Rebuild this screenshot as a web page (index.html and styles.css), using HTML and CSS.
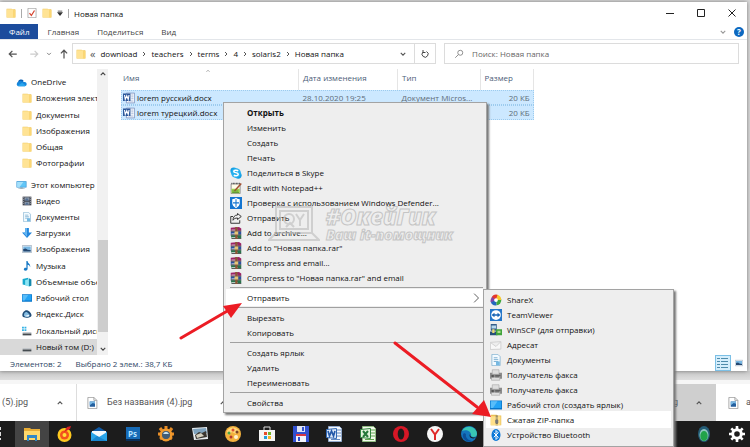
FILE: index.html
```html
<!DOCTYPE html>
<html lang="ru">
<head>
<meta charset="utf-8">
<meta name="viewport" content="width=device-width, initial-scale=1">
<title>Новая папка</title>
<link rel="stylesheet" href="styles.css">
</head>
<body>
<svg class="sprites" aria-hidden="true">
  <symbol id="folder" viewBox="0 0 16 16"><path fill="#efc55c" d="M1 1h8l1 1h5v13H1z"/><path fill="#ffe394" d="M1 2h11v13H1z"/><path fill="#fbd775" d="M12 3h3v12h-4z"/></symbol>
  <symbol id="chev-r" viewBox="0 0 16 16"><path fill="none" stroke="currentColor" stroke-width="2" d="M6 4l4 4-4 4"/></symbol>
  <symbol id="chev-sub" viewBox="0 0 16 16"><path fill="none" stroke="currentColor" stroke-width="1.500" d="M5 1l7 7-7 7"/></symbol>
  <symbol id="chev-u" viewBox="0 0 16 16"><path fill="none" stroke="currentColor" stroke-width="3" d="M2 11l6-6 6 6"/></symbol>
  <symbol id="chev-d" viewBox="0 0 16 16"><path fill="none" stroke="currentColor" stroke-width="3" d="M2 5l6 6 6-6"/></symbol>
  <symbol id="cloud" viewBox="0 0 16 12"><path fill="#0a5fb4" d="M3 6a4.500 4.500 0 0 1 8-2l-4 7H3a3 3 0 0 1 0-5z"/><path fill="#1687dc" d="M5 5c3-1 5 1 7 1a3 3 0 0 1 1 6H3a3 3 0 0 1-1-5z"/><path fill="#29a5ee" d="M3 11l6-4 5 4-1 1H4z"/></symbol>
  <symbol id="pc" viewBox="0 0 16 16"><path fill="#2b8fd2" d="M0 2h16v10H0z"/><path fill="#62c6f7" d="M1 3h14v8H1z"/><path fill="#a4e0fb" d="M1 3h10l-6 8H1z"/><path fill="#7e98a8" d="M6 12h4v1h3v1H3v-1h3z"/></symbol>
  <symbol id="video" viewBox="0 0 16 16"><path fill="#40444e" d="M1 1h14v14H1z"/><path fill="#8896a8" d="M4 2h8v5H4zM4 9h8v5H4z"/><path stroke="#cfd5dd" stroke-dasharray="1.500 1.500" d="M2.500 2v12M13.500 2v12"/><path fill="#536e93" d="M5 6l3-3 3 4H5zM5 13l3-3 3 4H5z"/></symbol>
  <symbol id="doc" viewBox="0 0 16 16"><path fill="#f4fbff" stroke="#7baecf" d="M2.500.5h8l3 3v12h-11z"/><path stroke="#5f9cc4" d="M5 5h5M5 7.500h6M5 10h6"/><path fill="#76b9e2" d="M8 10h5v5H8z"/></symbol>
  <symbol id="down" viewBox="0 0 16 16"><path fill="#2386db" d="M5 0h6v7h5l-8 9-8-9h5z"/><path fill="#62b4f2" d="M5 0h3v14L2 7h3z"/></symbol>
  <symbol id="image" viewBox="0 0 16 16"><path fill="#f5f9fc" stroke="#8a9caf" d="M.5 2.500h15v11H.5z"/><path fill="#78b7e3" d="M2 4h12v8H2z"/><path fill="#24466f" d="M2 8l4-1 3 2 5 1v2H2z"/></symbol>
  <symbol id="music" viewBox="0 0 16 16"><path fill="#1879c5" d="M7 0h2c0 4 5 4 4 10-1-3-2-4-4-4v6c0 5-7 4-6 1 0-2 2-3 4-2z"/></symbol>
  <symbol id="cube" viewBox="0 0 16 16"><path fill="#18a9cd" d="M1 3l9-2v13l-9-2z"/><path fill="#8ce6f5" d="M5 5l6-2v12l-6-2z"/><path fill="#1589ac" d="M11 2l4 2v10l-4 1z"/></symbol>
  <symbol id="desk" viewBox="0 0 16 16"><path fill="#0875c9" d="M0 2h16v12H0z"/><path fill="#23a3f5" d="M1 3h14v9H1z"/><path fill="#58bdf9" d="M1 3h9l-6 9H1z"/></symbol>
  <symbol id="yadisk" viewBox="0 0 16 16"><path fill="#204d78" d="M1 12C-1 7 4 1 8 2s8 6 7 9-12 4-14 1z"/><path fill="#84bce1" d="M3 10c0-4 3-6 5-5s5 4 4 6-8 3-9-1z"/><path fill="#fff" d="M4 11l8-2-2 3z"/></symbol>
  <symbol id="windisk" viewBox="0 0 16 16"><path fill="#35b3e6" d="M0 1h3v3H0zM4 1h3v3H4zM0 5h3v3H0zM4 5h3v3H4z"/><path fill="#b8bec3" d="M1 10h14v2H1z"/><path fill="#454b50" d="M1 12h14v3H1z"/></symbol>
  <symbol id="disk" viewBox="0 0 16 16"><path fill="#b8bec3" d="M1 10h14v2H1z"/><path fill="#454b50" d="M1 12h14v3H1z"/></symbol>
  <symbol id="word" viewBox="0 0 16 16"><path fill="#fff" stroke="#6d87b8" d="M4.500 1.500h11v13h-11z"/><path stroke="#88a1cc" d="M11 4h3M11 6.500h3M11 9h3M7 12h7"/><path fill="#2b579a" d="M0 2h10v10H0z"/><path fill="none" stroke="#fff" stroke-width="1.500" d="M2 4l1 6 2-5 2 5 1-6"/></symbol>
  <symbol id="skype" viewBox="0 0 16 16"><circle cx="5" cy="5" r="4.500" fill="#169ee3"/><circle cx="11" cy="11" r="4.500" fill="#169ee3"/><circle cx="8" cy="8" r="6.500" fill="#25b1ef"/><path fill="none" stroke="#fff" stroke-width="2" d="M11 5c-2-1-6-1-6 1s6 1 6 3.500S7 12 5 11"/></symbol>
  <symbol id="npp" viewBox="0 0 16 16"><path fill="#fffde9" stroke="#777" d="M1.500 2.500h12v13h-12z"/><path stroke="#444" stroke-dasharray="1 1" stroke-width="2" d="M2 2h11"/><path fill="#9bd34b" d="M2 9h11v6H2z"/><path stroke="#a24f32" stroke-width="2" d="M15 2L6 12"/><path stroke="#54882f" d="M3 12h8M3 14h9"/></symbol>
  <symbol id="defender" viewBox="0 0 16 16"><path fill="#1475d1" d="M0 0h16v16H0z"/><path fill="#fff" d="M3 3c2 0 4-1 5-2 1 1 3 2 5 2v5c0 3-2 5-5 7-3-2-5-4-5-7z"/><path fill="#1475d1" d="M7.300 3h1.400v4H12v1.500H8.700V13H7.300V8.500H4V7h3.300z"/></symbol>
  <symbol id="share" viewBox="0 0 16 16"><path fill="none" stroke="#333" stroke-width="1.300" d="M4 6H1v9h12v-4M10 2l5 4-5 4V8c-3 0-5 1-6 3 0-4 2-7 6-7z"/></symbol>
  <symbol id="rar" viewBox="0 0 16 16"><path fill="#9c2366" d="M1 1l11-1 3 2v3H1z"/><path fill="#2c4e9e" d="M1 6h14v4H1z"/><path fill="#27744b" d="M1 11h14v4H2z"/><path stroke="#222" d="M1 5.500h14M1 10.500h14M2 15.500h13"/><path stroke="#e5e5e5" d="M2 4h8M2 9h8M2 14h8"/><path fill="#8d5635" d="M7 0h3v16H7z"/><path fill="#e3c577" d="M6 6h5v4H6z"/></symbol>
  <symbol id="sharex" viewBox="0 0 16 16"><path fill="#2367bd" d="M8 8L1 10a7 7 0 0 0 8 5z"/><path fill="#41a83d" d="M8 8l1 7a7 7 0 0 0 6-8z"/><path fill="#f6c82c" d="M8 8h7a7 7 0 0 0-6-7z"/><path fill="#e5362c" d="M8 8l2-7a7 7 0 0 0-8 4z"/><path fill="#8344a5" d="M8 8L3 4a7 7 0 0 0-2 7z"/><circle cx="8" cy="8" r="2.500" fill="#fff"/></symbol>
  <symbol id="tv" viewBox="0 0 16 16"><path fill="#2476c9" d="M0 0h16v16H0z"/><circle cx="8" cy="8" r="6.500" fill="#fff"/><path fill="#1764b5" d="M2 8l4-3v2h4V5l4 3-4 3V9H6v2z"/></symbol>
  <symbol id="scp" viewBox="0 0 16 16"><path fill="#345d8a" d="M1 0h8v9H1z"/><path fill="#b7d9ed" d="M2 2h6v4H2z"/><path fill="#265078" d="M0 10h10v5H0z"/><path fill="#41a43c" d="M8 7h8v8H8z"/><path fill="#b0df8d" d="M10 9h4v3h-4z"/><path fill="#eddb70" d="M3 7h3v5H3z"/></symbol>
  <symbol id="mail" viewBox="0 0 16 16"><path fill="#f8f8f8" stroke="#c7c7c7" d="M.5 4.500l14-1v10l-14 .5zM1 5l7 5 6-6"/></symbol>
  <symbol id="fax" viewBox="0 0 16 16"><path fill="#8b8b8b" d="M0 5h16v8H0z"/><path fill="#dedede" stroke="#999" stroke-width=".7" d="M3 1h9v6H3zM2 11h11v4H2z"/><path fill="#555" d="M2 8h3v3H2zM7 8h7v1H7zM7 10h5v1H7z"/></symbol>
  <symbol id="zip" viewBox="0 0 16 16"><path fill="#e9bf56" d="M1 1h8l1 1h5v13H1z"/><path fill="#ffe08a" d="M1 3h13v12H1z"/><path stroke="#7d755f" stroke-width="3" stroke-dasharray="1.500 1" d="M9 2v13"/><path fill="#777" d="M7 8h4v4H7z"/></symbol>
  <symbol id="bt" viewBox="0 0 16 16"><ellipse cx="8" cy="8" rx="6" ry="8" fill="#0b78d8"/><path fill="none" stroke="#fff" stroke-width="1.300" d="M5 5l6 6-3 3V2l3 3-6 6"/></symbol>
  <symbol id="jpg" viewBox="0 0 16 16"><path fill="#fff" stroke="#909090" d="M2.500.5h8l4 4v11h-12z"/><path fill="none" stroke="#909090" d="M10.500.5v4h4"/><path fill="#245f9e" d="M5 6h7v7H5z"/><path fill="#78b8e4" d="M5 6h7v3L9 8l-4 3z"/></symbol>
</svg>

<div class="desktop">
  <main class="window">
    <header class="titlebar">
      <svg class="ic10"><use href="#folder"/></svg><i class="bar"></i>
      <svg class="ic10" viewBox="0 0 16 16"><path fill="#fff" stroke="#8a8a8a" d="M1.500.5h13v15h-13z"/><path fill="none" stroke="#d6432f" stroke-width="2" d="M4 8l3 4 5-8"/></svg>
      <svg class="ic10"><use href="#folder"/></svg>
      <svg class="ic6" viewBox="0 0 8 8"><path stroke="#333" d="M1 1.500h6"/><path fill="#333" d="M0 3h8L4 8z"/></svg><i class="bar"></i>
      <h1>Новая папка</h1>
      <div class="controls">
        <button aria-label="Свернуть"><svg viewBox="0 0 10 10"><path d="M1 5.500h8"/></svg></button>
        <button aria-label="Развернуть"><svg viewBox="0 0 10 10"><path d="M1.500 1.500h7v7h-7z"/></svg></button>
        <button aria-label="Закрыть"><svg viewBox="0 0 10 10"><path d="M1.500 1.500l7 7M8.500 1.500l-7 7"/></svg></button>
      </div>
    </header>
    <nav class="tabs">
      <button class="file">Файл</button><button>Главная</button><button>Поделиться</button><button>Вид</button>
      <div class="help">
        <svg class="ic6"><use href="#chev-d"/></svg>
        <button aria-label="Справка">?</button>
      </div>
    </nav>
    <div class="navrow">
      <div class="arrows">
        <svg class="ic10" viewBox="0 0 16 16"><path d="M14 8H2M7 3L2 8l5 5"/></svg>
        <svg class="ic10 off" viewBox="0 0 16 16"><path d="M2 8h12M9 3l5 5-5 5"/></svg>
        <svg class="ic6 mid" viewBox="0 0 16 16"><path d="M3 5l5 5 5-5"/></svg>
        <svg class="ic10" viewBox="0 0 16 16"><path d="M8 15V2M3 7l5-5 5 5"/></svg>
      </div>
      <div class="address">
        <svg class="ic10"><use href="#folder"/></svg>
        <span class="more">«</span>
        <a href="#">download</a><svg class="ic8"><use href="#chev-r"/></svg>
        <a href="#">teachers</a><svg class="ic8"><use href="#chev-r"/></svg>
        <a href="#">terms</a><svg class="ic8"><use href="#chev-r"/></svg>
        <a href="#">4</a><svg class="ic8"><use href="#chev-r"/></svg>
        <a href="#">solaris2</a><svg class="ic8"><use href="#chev-r"/></svg>
        <a href="#">Новая папка</a>
        <svg class="ic6 drop"><use href="#chev-d"/></svg>
        <button class="refresh" aria-label="Обновить"><svg class="ic8" viewBox="0 0 16 16"><path fill="none" stroke="#444" stroke-width="2" d="M11 3a6 6 0 1 1-7 1M4 0v5h5"/></svg></button>
      </div>
      <label class="search">
        <svg class="ic10" viewBox="0 0 16 16"><path fill="none" stroke="#777" stroke-width="1.300" d="M14 6a4 4 0 1 1-8 0 4 4 0 0 1 8 0zM7 9l-5 5"/></svg>
        <input type="search" aria-label="Поиск" placeholder="Поиск: Новая папка">
      </label>
    </div>
    <div class="body">
      <aside class="tree">
        <ul class="group six">
          <li class="root"><svg><use href="#cloud"/></svg>OneDrive</li>
          <li><svg><use href="#folder"/></svg>Вложения элект</li>
          <li><svg><use href="#folder"/></svg>Документы</li>
          <li><svg><use href="#folder"/></svg>Изображения</li>
          <li><svg><use href="#folder"/></svg>Общая</li>
          <li><svg><use href="#folder"/></svg>Фотографии</li>
        </ul>
        <ul class="group eleven">
          <li class="root"><svg><use href="#pc"/></svg>Этот компьютер</li>
          <li><svg><use href="#video"/></svg>Видео</li>
          <li><svg><use href="#doc"/></svg>Документы</li>
          <li><svg><use href="#down"/></svg>Загрузки</li>
          <li><svg><use href="#image"/></svg>Изображения</li>
          <li><svg><use href="#music"/></svg>Музыка</li>
          <li><svg><use href="#cube"/></svg>Объемные объе</li>
          <li><svg><use href="#desk"/></svg>Рабочий стол</li>
          <li><svg><use href="#yadisk"/></svg>Яндекс.Диск</li>
          <li><svg><use href="#windisk"/></svg>Локальный диск</li>
          <li class="current"><svg><use href="#disk"/></svg>Новый том (D:)</li>
        </ul>
      </aside>
      <div class="scroll">
        <svg class="ic6"><use href="#chev-u"/></svg>
        <i class="track"></i><i class="thumb"></i>
        <svg class="ic6"><use href="#chev-d"/></svg>
      </div>
      <section class="files">
        <svg class="sort"><use href="#chev-u"/></svg>
        <table>
          <thead><tr><th class="c-name">Имя</th><th class="c-date">Дата изменения</th><th class="c-type">Тип</th><th class="c-size">Размер</th></tr></thead>
          <tbody>
            <tr><td><span><svg class="ic12"><use href="#word"/></svg>lorem русский.docx</span></td><td>28.10.2020 19:25</td><td>Документ Micros...</td><td>20 КБ</td></tr>
            <tr><td><span><svg class="ic12"><use href="#word"/></svg>lorem турецкий.docx</span></td><td></td><td></td><td>20 КБ</td></tr>
          </tbody>
        </table>
      </section>
    </div>
    <footer class="status">
      <span>Элементов: 2</span><span>Выбрано 2 элем.: 38,7 КБ</span>
      <div class="views">
        <button class="on" aria-label="Таблица"><svg viewBox="0 0 14 14"><path stroke="#4f8cab" stroke-dasharray="3 1 7 1" d="M1 2.500h12M1 5.500h12M1 8.500h12M1 11.500h12"/></svg></button>
        <button aria-label="Эскизы"><svg class="ic8"><use href="#image"/></svg></button>
      </div>
    </footer>
  </main>

  <div class="backdrop"></div>

  <div class="downloads">
    <div class="dl first"><span>ю (5).jpg</span><svg class="ic6"><use href="#chev-u"/></svg></div>
    <div class="dl second"><svg class="ic12"><use href="#jpg"/></svg><span>Без названия (4).jpg</span><svg class="ic6"><use href="#chev-u"/></svg></div>
    <div class="dl hot"><span>.jpg</span><svg class="ic6"><use href="#chev-u"/></svg></div>
    <div class="dl last"><svg class="ic12"><use href="#jpg"/></svg><span>a</span></div>
  </div>

  <nav class="taskbar">
    <span class="edge"><svg viewBox="0 0 16 16"><path fill="#ddd" d="M0 1h1v3H0zM0 6h1v4H0zM0 12h1v2H0z"/></svg></span>
    <span class="app active"><svg viewBox="0 0 16 16"><path fill="#e9ad35" d="M0 2h6l1 1h9v11H0z"/><path fill="#ffd96b" d="M0 5h16v9H0z"/><path fill="#3289c7" d="M3 9h10v6h-2v-3H5v3H3z"/></svg></span>
    <span class="app"><svg viewBox="0 0 16 16"><circle cx="7.500" cy="9" r="7" fill="#ffc91f"/><circle cx="7.500" cy="9" r="4.500" fill="#f4511e"/><circle cx="7.500" cy="9" r="2" fill="#ffdf37"/><path fill="#d82222" d="M7 6l3-5 4-1-1 3z"/></svg></span>
    <span class="app"><svg viewBox="0 0 16 16"><path fill="#0f5aa6" d="M0 6l8-5 8 5v9H0z"/><path fill="#f4f8fb" d="M1 5h14v6H1z"/><path fill="#2aa4e8" d="M0 6l8 5 8-5v9H0z"/><path fill="#1986cf" d="M0 15l6-5 2 1 8 4z"/></svg></span>
    <span class="app"><svg viewBox="0 0 16 16"><path fill="#092e57" d="M1 1h14v14H1z"/><path fill="#176bb6" d="M1 1h14v12H1z"/><text x="3" y="11" class="ps">Ps</text></svg></span>
    <span class="app"><svg viewBox="0 0 16 16"><path stroke="#e78c26" stroke-width="3" d="M8 0v4M2 2l3 4M14 2l-3 4M0 8h4M12 8h4M2 13l3-2M14 13l-3-2"/><circle cx="8" cy="9" r="5" fill="none" stroke="#f09a2e" stroke-width="3"/><circle cx="8" cy="9" r="4" fill="#415c77"/><path fill="#c8e1ef" d="M5 8c2-3 4-3 6 0z"/></svg></span>
    <span class="app"><svg viewBox="0 0 16 16"><path fill="#e9edf0" d="M0 2l15-1 1 12-14 1z"/><path fill="#7fa3be" d="M1 3l13-1 1 5-13 1z"/><path fill="#3a3630" d="M3 9l4-3 3 1 4-2 1 6-11 2z"/><path fill="#d5d0bf" d="M4 9l5-2 3 3-7 2z"/></svg></span>
    <span class="app"><svg viewBox="0 0 16 16"><circle cx="8" cy="8" r="8" fill="#f3b13d"/><path fill="#ffd979" d="M2 5a7 7 0 0 1 12 0l-3 3-4-2-4 3z"/><circle cx="4" cy="7" r="1.500" fill="#48a447"/><circle cx="8" cy="4" r="1.500" fill="#d94e33"/><circle cx="12" cy="6" r="1.500" fill="#7a4226"/><circle cx="6" cy="11" r="1.500" fill="#b63830"/><circle cx="11" cy="11" r="2" fill="#fff3d1"/></svg></span>
    <span class="app"><svg viewBox="0 0 16 16"><path fill="none" stroke="#ddd" d="M5 5V1h6v4"/><path fill="#f5f5f5" d="M0 4h16v11H0z"/><path fill="#e84c2a" d="M5 6h3v3H5z"/><path fill="#71b42c" d="M9 6h3v3H9z"/><path fill="#229dd8" d="M5 10h3v3H5z"/><path fill="#f3b624" d="M9 10h3v3H9z"/></svg></span>
    <span class="app"><svg viewBox="0 0 16 16"><path fill="#3150d0" d="M0 0h16v16H0z"/><path fill="#dee4f5" d="M4 0h8v6H4z"/><path fill="#d53645" d="M3 8h10v2H3z"/><path fill="#f2f4fb" d="M3 10h10v6H3z"/><path fill="#3150d0" d="M5 11h2v4H5zM9 1h2v4H9z"/></svg></span>
    <span class="app"><svg viewBox="0 0 16 16"><path fill="#f7f9fc" stroke="#92a9cb" d="M2.500.5h11l2 2v13h-13z"/><path stroke="#638ac3" d="M11 4h4M11 7h4M11 10h4M5 13.500h9"/><path fill="#dce8f8" stroke="#3169b5" d="M.5 3.500l10-1v10l-10-1z"/><path fill="none" stroke="#2459a8" stroke-width="1.700" d="M2 5l1.500 5L5.500 5l2 5L9 5"/></svg></span>
    <span class="app"><svg viewBox="0 0 16 16"><path fill="#f2faec" stroke="#92bd84" d="M2.500.5h11l2 2v13h-13z"/><path stroke="#5ea54c" d="M11 4h4M11 7h4M11 10h4M5 13.500h9"/><path fill="#e2f3dc" stroke="#338541" d="M.5 3.500l10-1v10l-10-1z"/><path stroke="#26783a" stroke-width="2" d="M3 5l5 6M8 5l-5 6"/></svg></span>
    <span class="app"><svg viewBox="0 0 16 16"><circle cx="8" cy="8" r="8" fill="#d61726"/><ellipse cx="8" cy="8" rx="3.300" ry="5.500" fill="#1c1c1c"/></svg></span>
    <span class="app"><svg viewBox="0 0 16 16"><circle cx="8" cy="8" r="8" fill="#f7f7f7"/><path fill="none" stroke="#df2a2a" stroke-width="2" d="M4 3l4 5.500L12 3M8 8v6"/></svg></span>
    <span class="app"><svg viewBox="0 0 16 16"><circle cx="8" cy="8" r="8" fill="#1474bd"/><path fill="#39c6b4" d="M1 5C4-2 16 0 16 8c0 3-4 4-6 2 1-5-5-7-9-5z"/><path fill="#0d4e98" d="M5 8c-1 4 3 7 7 7-6 3-13-4-9-8z"/><path fill="#1c1c1c" d="M9 8c0 4 4 4 6 3-2 3-8 1-6-3z"/></svg></span>
    <span class="skip"></span>
    <span class="app"><svg viewBox="0 0 16 16"><ellipse cx="8" cy="8" rx="6" ry="8" fill="#245c76"/><ellipse cx="8" cy="9" rx="4.500" ry="6" fill="#8fc9c0"/><ellipse cx="8" cy="10" rx="3.700" ry="5" fill="#21a34a"/></svg></span>
    <span class="app"><svg viewBox="0 0 16 16"><circle cx="8" cy="8" r="4.300" fill="none" stroke="#fff" stroke-width="3"/><path stroke="#fff" stroke-width="2.600" d="M8 0v3M8 13v3M0 8h3M13 8h3M2.300 2.300l2 2M11.700 11.700l2 2M13.700 2.300l-2 2M4.300 11.700l-2 2"/></svg></span>
  </nav>

  <menu class="menu context">
    <li><button class="strong">Открыть</button></li>
    <li><button>Изменить</button></li>
    <li><button>Создать</button></li>
    <li><button>Печать</button></li>
    <li><button><svg><use href="#skype"/></svg>Поделиться в Skype</button></li>
    <li><button><svg><use href="#npp"/></svg>Edit with Notepad++</button></li>
    <li><button><svg><use href="#defender"/></svg>Проверка с использованием Windows Defender...</button></li>
    <li><button><svg><use href="#share"/></svg>Отправить</button></li>
    <li><button><svg><use href="#rar"/></svg>Add to archive...</button></li>
    <li><button><svg><use href="#rar"/></svg>Add to "Новая папка.rar"</button></li>
    <li><button><svg><use href="#rar"/></svg>Compress and email...</button></li>
    <li><button><svg><use href="#rar"/></svg>Compress to "Новая папка.rar" and email</button></li>
    <li class="sep"></li>
    <li><button class="hover">Отправить<svg class="sub"><use href="#chev-sub"/></svg></button></li>
    <li class="sep"></li>
    <li><button>Вырезать</button></li>
    <li><button>Копировать</button></li>
    <li class="sep"></li>
    <li><button>Создать ярлык</button></li>
    <li><button>Удалить</button></li>
    <li><button>Переименовать</button></li>
    <li class="sep"></li>
    <li><button>Свойства</button></li>
  </menu>

  <div class="watermark">
    <svg viewBox="0 0 52 36"><path d="M8 1h36v26H8zM12 5h28v18H12zM8 27l-7 7h50l-7-7z"/><circle cx="21" cy="13" r="5"/><path d="M28 8l4 6 4-6M32 14v6M18 21l4-4 4 4"/></svg>
    <div><b>#ОкейГик</b><em>Ваш it-помощник</em></div>
  </div>

  <menu class="menu sendto">
    <li><button><svg><use href="#sharex"/></svg>ShareX</button></li>
    <li><button><svg><use href="#tv"/></svg>TeamViewer</button></li>
    <li><button><svg><use href="#scp"/></svg>WinSCP (для отправки)</button></li>
    <li><button><svg><use href="#mail"/></svg>Адресат</button></li>
    <li><button><svg><use href="#doc"/></svg>Документы</button></li>
    <li><button><svg><use href="#fax"/></svg>Получатель факса</button></li>
    <li><button><svg><use href="#fax"/></svg>Получатель факса</button></li>
    <li><button><svg><use href="#desk"/></svg>Рабочий стол (создать ярлык)</button></li>
    <li><button class="hover"><svg><use href="#zip"/></svg>Сжатая ZIP-папка</button></li>
    <li><button><svg><use href="#bt"/></svg>Устройство Bluetooth</button></li>
  </menu>

  <svg class="pointer one" viewBox="0 0 64 40"><path stroke="#ec1c24" stroke-width="3" stroke-linecap="round" d="M2 37L50 9"/><path fill="#ec1c24" d="M63 2L44 5l8 12z"/></svg>
  <svg class="pointer two" viewBox="0 0 100 78"><path stroke="#ec1c24" stroke-width="3" stroke-linecap="round" d="M2 2l82 64"/><path fill="#ec1c24" d="M98 76l-7-17-12 14z"/></svg>
</div>
</body>
</html>
```
FILE: styles.css
```css
* { box-sizing: border-box; }

body {
  margin: 0;
  font: 8px/15px "Open Sans", "Noto Sans", sans-serif;
  color: #111;
}

button, input {
  font: inherit;
  color: inherit;
  border: 0;
  padding: 0;
  margin: 0;
  background: none;
}

ul, menu { list-style: none; margin: 0; padding: 0; }
a { color: inherit; text-decoration: none; }
svg { flex: none; display: block; }

.sprites { position: absolute; width: 0; height: 0; }
.ic6 { width: 6px; height: 6px; }
.ic8 { width: 8px; height: 8px; }
.ic10 { width: 10px; height: 10px; }
.ic12 { width: 12px; height: 12px; }

.desktop {
  position: relative;
  display: flex;
  flex-direction: column;
  min-height: 100vh;
  padding-top: 2px;
  overflow: hidden;
  background: #d9d9d9;
}

/* Explorer window */
.window {
  flex: 1;
  display: flex;
  flex-direction: column;
  margin-right: 3px;
  background: #fff;
  box-shadow: 0 0 4px #777;
  z-index: 1;
}

.titlebar {
  display: flex;
  align-items: center;
  height: 22px;
  padding-left: 6px;
  gap: 5px;
}
.titlebar h1 { margin: 0; font-size: 8px; font-weight: 400; }
.bar { width: 1px; height: 9px; background: #aaa; }
.controls { display: flex; margin-left: auto; }
.controls button { width: 31px; height: 22px; display: grid; place-items: center; }
.controls svg { width: 10px; height: 10px; fill: none; stroke: #222; }

.tabs {
  display: flex;
  height: 16px;
  border-bottom: 1px solid #e3e6ea;
  color: #444;
}
.tabs > button { padding: 0 9px; }
.tabs .file { background: #1c4c9c; color: #fff; }
.help { display: flex; align-items: center; gap: 8px; margin-left: auto; padding-right: 3px; color: #999; }
.help button {
  width: 10px; height: 10px;
  border-radius: 50%;
  background: #0c68c0;
  color: #fff;
  font-size: 8px;
  font-weight: 700;
  line-height: 10px;
}

.navrow { display: flex; height: 21px; margin: 3px 8px 0 0; }
.arrows { display: flex; align-items: center; justify-content: space-between; width: 72px; padding: 0 3px 0 8px; }
.arrows svg { fill: none; stroke: #555; stroke-width: 2; }
.arrows .off { stroke: #ccc; margin-left: 4px; }
.address, .search { display: flex; align-items: center; border: 1px solid #dcdcdc; min-width: 0; }
.address { flex: 368; padding-left: 3px; white-space: nowrap; margin-right: 8px; }
.address a { padding: 0 3px; }
.address .ic8 { color: #555; }
.address .more { margin: 0 2px 0 4px; color: #555; font-size: 11px; }
.address .drop { margin: 0 8px 0 auto; color: #555; }
.refresh { align-self: stretch; width: 21px; border-left: 1px solid #dcdcdc; display: grid; place-items: center; }
.search { flex: 291; padding-left: 9px; gap: 8px; }
.search input { flex: 1; min-width: 0; outline: 0; }
.search input::placeholder { color: #666; opacity: 1; }

.body { flex: 1; display: flex; min-height: 0; padding-top: 5px; }

.tree { display: flex; flex-direction: column; width: 97px; padding-top: 5px; }
.group { display: grid; grid-auto-rows: 1fr; }
.six { flex: 6; margin-bottom: 5px; }
.eleven { flex: 11; }
.tree li {
  display: flex;
  align-items: center;
  gap: 4px;
  padding-left: 22px;
  line-height: 16px;
  white-space: nowrap;
  overflow: hidden;
}
.tree li svg { width: 10px; height: 10px; }
.tree .root { padding-left: 16px; }
.tree .root svg { width: 11px; }
.tree .current { background: #d9d9d9; }

.scroll { display: flex; flex-direction: column; align-items: center; width: 11px; padding: 2px 0 3px; background: #f1f1f1; }
.scroll svg { color: #444; }
.track { flex: 163; }
.thumb { flex: 92; width: 10px; background: #cdcdcd; margin-bottom: 14px; }

.files { flex: 1; position: relative; padding-left: 13px; min-width: 0; }
.sort { position: absolute; left: 97px; top: 0; width: 6px; height: 4px; color: #888; }
.files table { width: 66%; border-collapse: collapse; table-layout: fixed; white-space: nowrap; }
.files th { height: 21px; padding: 0 0 4px 4px; text-align: left; font-weight: 400; color: #4c5d78; border-right: 1px solid #e5e5e5; }
.files th:first-child { padding-left: 2px; }
.c-name { width: 43%; }
.c-date { width: 24%; }
.c-type { width: 20%; }
.c-size { width: 13%; }
.files tbody tr { background: #cce8ff; outline: 1px dotted #9ccbee; outline-offset: -1px; }
.files td { height: 15px; padding: 0 4px; line-height: 13px; color: #5f6c78; overflow: hidden; }
.files td:first-child { padding-left: 2px; color: #111; }
.files td:last-child { text-align: right; }
.files td span { display: flex; align-items: center; gap: 2px; }

.status { display: flex; align-items: center; gap: 14px; height: 16px; padding: 0 4px 0 10px; color: #2e4766; }
.views { display: flex; align-items: center; gap: 4px; margin-left: auto; }
.views .on { width: 16px; height: 16px; border: 1px solid #7cc0e6; background: #d5eefc; }

/* Browser strip behind the window */
.backdrop { height: 13px; background: linear-gradient(#c9c9c9, #dedede 9px, #f6f6f6 9px); }

.downloads { display: flex; height: 37px; background: #fff; color: #555; font: 9px/15px Roboto, sans-serif; }
.dl { display: flex; align-items: center; white-space: nowrap; overflow: hidden; }
.first { width: 77px; justify-content: flex-end; gap: 29px; padding-right: 13px; border-right: 1px solid #ddd; }
.second { flex: 1; padding-left: 9px; gap: 9px; }
.second .ic6 { margin-left: 19px; }
.hot { width: 80px; justify-content: flex-end; gap: 18px; padding-right: 14px; background: #cfcfcf; }
.last { width: 34px; padding-left: 11px; gap: 7px; }

.taskbar { display: flex; height: 26px; background: #1c1c1c; overflow: hidden; }
.edge { width: 2%; display: grid; align-items: center; }
.app { flex: none; width: 4.48%; display: grid; place-items: center; }
.skip { flex: none; width: 26.88%; }
.taskbar svg { width: 16px; height: 16px; }
.active { background: #444; }
.ps { font: 700 8px "Open Sans", sans-serif; fill: #b9e2ff; }

/* Menus */
.menu {
  position: absolute;
  z-index: 2;
  padding: 2px;
  background: #eee;
  border: 1px solid #a3a3a3;
  box-shadow: 2px 2px 2px #777;
}
.context { left: 223px; top: 102px; width: 264px; }
.sendto { left: 483px; top: 289px; width: 191px; z-index: 3; padding-bottom: 4px; }
.menu li { height: 15px; }
.menu button {
  position: relative;
  display: flex;
  align-items: center;
  width: 100%;
  height: 15px;
  padding-left: 21px;
  white-space: nowrap;
}
.menu button svg { position: absolute; left: 4px; width: 12px; height: 12px; }
.menu .strong { font-weight: 700; }
.menu .hover { background: #fff; box-shadow: 0 1px #fff, 0 -1px #fff; }
.menu button .sub { left: auto; right: 3px; width: 10px; height: 10px; color: #555; }
.menu .sep { height: 5px; margin: 0 1px 0 4px; background: linear-gradient(#a0a0a0, #a0a0a0) center / 100% 1px no-repeat; }

.watermark {
  position: absolute;
  z-index: 2;
  left: 268px;
  top: 206px;
  display: flex;
  gap: 6px;
  opacity: 0.6;
  pointer-events: none;
}
.watermark svg { width: 52px; height: 36px; fill: none; stroke: #bbb; stroke-width: 2; }
.watermark b, .watermark em { display: block; font-weight: 800; font-style: italic; color: #eee; -webkit-text-stroke: 1px #aaa; }
.watermark b { font-size: 22px; line-height: 20px; }
.watermark em { font-size: 14px; line-height: 18px; }

.pointer { position: absolute; z-index: 4; fill: none; }
.one { left: 179px; top: 301px; width: 64px; height: 40px; }
.two { left: 393px; top: 341px; width: 100px; height: 78px; }
```
